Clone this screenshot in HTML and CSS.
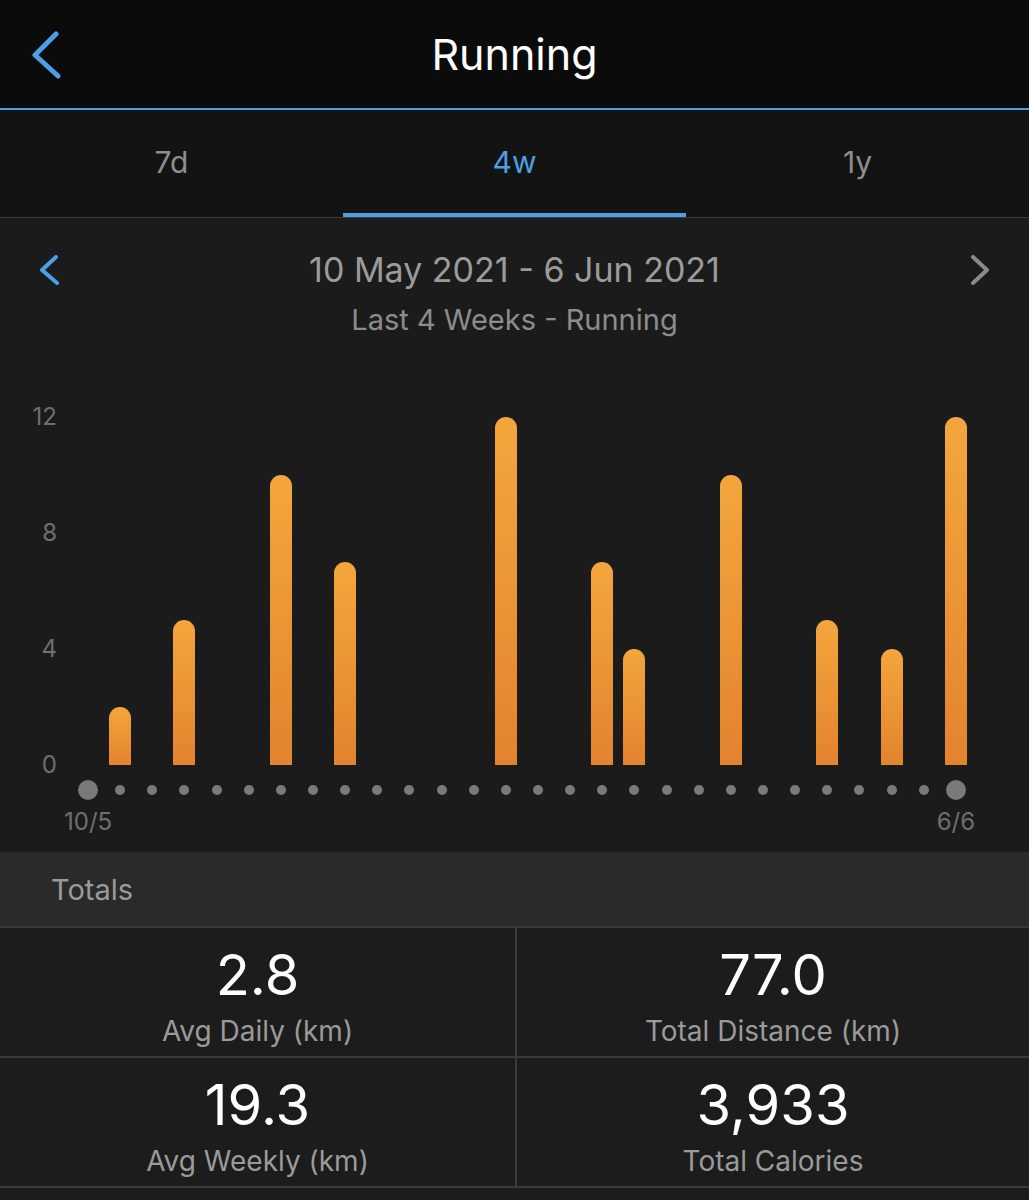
FILE: index.html
```html
<!DOCTYPE html>
<html lang="en">
<head>
    <meta charset="UTF-8">
    <meta name="viewport" content="width=device-width, initial-scale=1.0">
    <title>Running</title>
    <link rel="stylesheet" href="styles.css">
</head>
<body>

<header class="topbar">
    <div class="back">
        <svg width="30" height="50" viewBox="0 0 30 50">
            <path d="M25 5 L4 26 L27 47" fill="none" stroke="#4a9fe6" stroke-width="5" stroke-linecap="round" stroke-linejoin="round"/>
        </svg>
    </div>
    <h1 class="title">Running</h1>
    <div></div>
</header>

<nav class="tabs">
    <div class="tab">7d</div>
    <div class="tab active">4w</div>
    <div class="tab">1y</div>
</nav>

<section class="chart-section">
    <div class="range">
        <svg class="arrow" width="22" height="30" viewBox="0 0 22 30">
            <path d="M18 2 L4 15 L19 28" fill="none" stroke="#4a9fe6" stroke-width="4" stroke-linecap="round" stroke-linejoin="round"/>
        </svg>
        <div class="range-text">
            <div class="range-dates">10 May 2021 - 6 Jun 2021</div>
            <div class="range-sub">Last 4 Weeks - Running</div>
        </div>
        <svg class="arrow" width="22" height="30" viewBox="0 0 22 30">
            <path d="M4 2 L18 15 L4 28" fill="none" stroke="#8a8a8a" stroke-width="4" stroke-linecap="round" stroke-linejoin="round"/>
        </svg>
    </div>

    <div class="chart">
        <div class="y-axis">
            <span>12</span>
            <span>8</span>
            <span>4</span>
            <span>0</span>
        </div>
        <div class="bars" id="bars"></div>
        <div class="dots" id="dots"></div>
        <div class="x-labels">
            <span class="first">10/5</span>
            <span class="last">6/6</span>
        </div>
    </div>
</section>

<div class="totals-head">Totals</div>

<div class="stats">
    <div class="stat">
        <div class="value">2.8</div>
        <div class="label">Avg Daily (km)</div>
    </div>
    <div class="stat">
        <div class="value">77.0</div>
        <div class="label">Total Distance (km)</div>
    </div>
    <div class="stat">
        <div class="value">19.3</div>
        <div class="label">Avg Weekly (km)</div>
    </div>
    <div class="stat">
        <div class="value">3,933</div>
        <div class="label">Total Calories</div>
    </div>
</div>

<script>
    // km per day, 10/5 .. 6/6
    const days = [0, 2, 0, 5, 0, 0, 10, 0, 7, 0, 0, 0, 0, 12,
                  0, 0, 7, 4, 0, 0, 10, 0, 0, 5, 0, 4, 0, 12];
    const unit = 29;

    const bars = document.getElementById('bars');
    const dots = document.getElementById('dots');

    days.forEach((km, i) => {
        const col = document.createElement('div');
        col.className = 'col';
        if (km > 0) {
            const bar = document.createElement('div');
            bar.className = 'bar';
            bar.style.height = (km * unit) + 'px';
            col.appendChild(bar);
        }
        bars.appendChild(col);

        const cell = document.createElement('div');
        cell.className = 'dot-cell';
        const dot = document.createElement('span');
        dot.className = (i === 0 || i === days.length - 1) ? 'dot big' : 'dot';
        cell.appendChild(dot);
        dots.appendChild(cell);
    });
</script>

</body>
</html>
```

FILE: styles.css
```css
body {
    margin: 0;
    background-color: #1b1b1b;
    font-family: Inter, 'Noto Sans', sans-serif;
    color: #fff;
}

.topbar {
    display: grid;
    grid-template-columns: 1fr auto 1fr;
    align-items: center;
    height: 108px;
    background-color: #0b0b0b;
    border-bottom: 2px solid #4a9fe6;
}

.back {
    padding-left: 31px;
    display: flex;
    align-items: center;
}

.title {
    margin: 0;
    font-size: 43px;
    font-weight: 400;
    line-height: 50px;
    color: #fff;
}

.tabs {
    display: grid;
    grid-template-columns: repeat(3, 1fr);
    height: 107px;
    background-color: #131313;
    border-bottom: 1px solid #3d3d3d;
}

.tab {
    display: flex;
    align-items: center;
    justify-content: center;
    font-size: 30px;
    color: #8e8e8e;
    border-bottom: 4px solid transparent;
}

.tab.active {
    color: #4a9fe6;
    border-bottom-color: #4a9fe6;
}

.chart-section {
    background-color: #1b1b1b;
    padding: 32px 0 13px;
}

.range {
    display: flex;
    align-items: flex-start;
    padding: 0 38px;
}

.arrow {
    margin-top: 5px;
    flex-shrink: 0;
}

.range-text {
    flex: 1;
    text-align: center;
}

.range-dates {
    font-size: 34px;
    line-height: 40px;
    color: #9b9b9b;
}

.range-sub {
    margin-top: 12px;
    font-size: 29px;
    line-height: 36px;
    color: #8c8c8c;
}

.chart {
    display: grid;
    grid-template-columns: 72px 900px;
    grid-template-rows: 360px 20px 24px;
    row-gap: 15px;
    margin-top: 67px;
}

.chart .y-axis {
    grid-column: 1;
    grid-row: 1;
    height: 372px;
    display: flex;
    flex-direction: column;
    justify-content: space-between;
    align-items: flex-end;
    padding-right: 15px;
    font-size: 24px;
    line-height: 24px;
    color: #6f6f6f;
}

.bars {
    grid-column: 2;
    grid-row: 1;
    display: grid;
    grid-template-columns: repeat(28, minmax(0, 1fr));
}

.col {
    display: flex;
    justify-content: center;
    align-items: flex-end;
}

.bar {
    width: 22px;
    border-radius: 11px 11px 0 0;
    background: linear-gradient(to bottom, #f3a63c, #e3832e);
}

.dots {
    grid-column: 2;
    grid-row: 2;
    display: grid;
    grid-template-columns: repeat(28, minmax(0, 1fr));
}

.dot-cell {
    display: flex;
    align-items: center;
    justify-content: center;
}

.dot {
    width: 10px;
    height: 10px;
    border-radius: 50%;
    background-color: #7a7a7a;
}

.dot.big {
    width: 20px;
    height: 20px;
}

.x-labels {
    grid-column: 2;
    grid-row: 3;
    margin-top: -5px;
    display: grid;
    grid-template-columns: repeat(28, minmax(0, 1fr));
    font-size: 24px;
    line-height: 24px;
    color: #6f6f6f;
}

.x-labels span {
    display: flex;
    justify-content: center;
    white-space: nowrap;
}

.x-labels .first {
    grid-column: 1;
}

.x-labels .last {
    grid-column: 28;
}

.totals-head {
    height: 74px;
    display: flex;
    align-items: center;
    padding-left: 51px;
    background-color: #2a2a2a;
    border-bottom: 2px solid #3a3a3a;
    font-size: 29px;
    color: #9a9a9a;
}

.stats {
    display: grid;
    grid-template-columns: 515px 1fr;
    background-color: #1c1c1c;
    padding-bottom: 9px;
}

.stat {
    height: 130px;
    box-sizing: border-box;
    padding-top: 17px;
    text-align: center;
    border-bottom: 2px solid #3a3a3a;
}

.stat:nth-child(even) {
    border-left: 2px solid #3a3a3a;
}

.value {
    font-size: 56px;
    line-height: 60px;
    color: #fff;
}

.label {
    margin-top: 8px;
    font-size: 28px;
    line-height: 36px;
    color: #9a9a9a;
}
```
